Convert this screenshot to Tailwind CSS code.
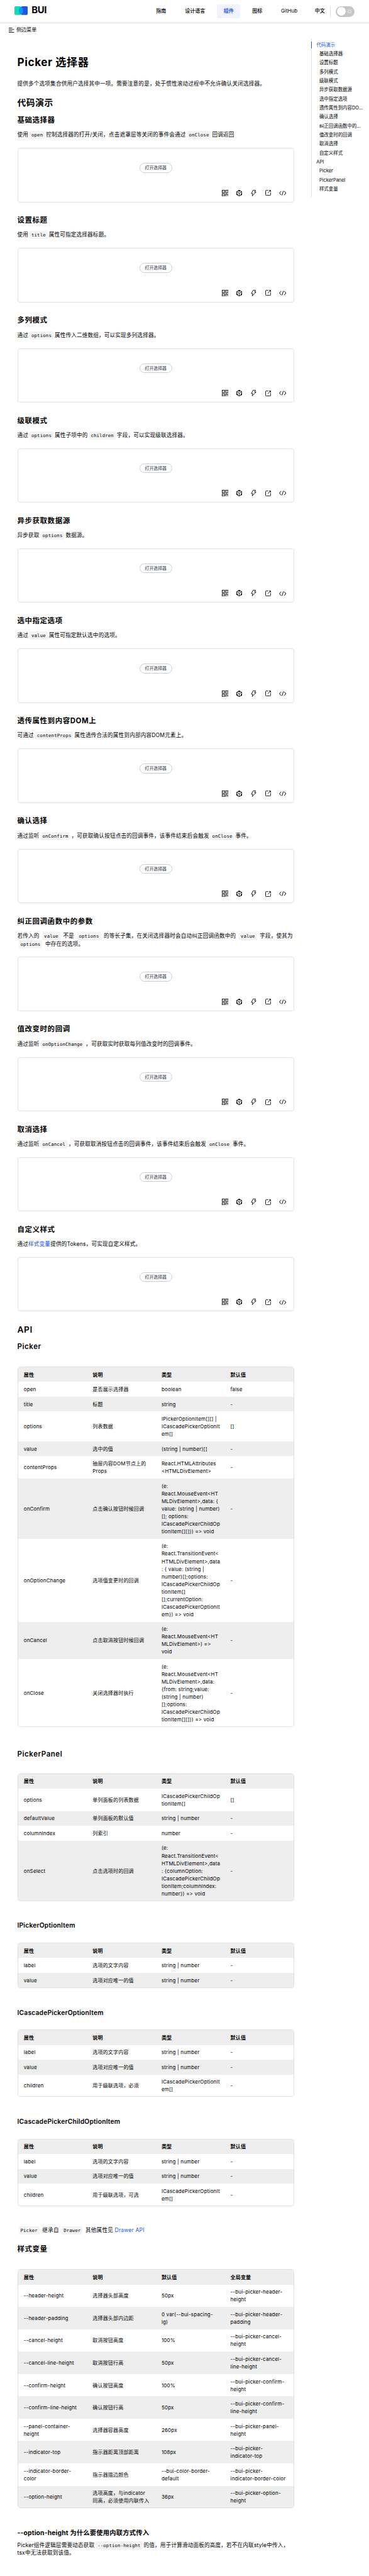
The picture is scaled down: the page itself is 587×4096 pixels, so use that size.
<!DOCTYPE html>
<html lang="zh-CN">
<head>
<meta charset="utf-8">
<title>Picker 选择器 - BUI</title>
<script src="https://cdn.jsdelivr.net/npm/@tailwindcss/browser@4"></script>
</head>
<body class="bg-white overflow-hidden">
<svg class="hidden">
  <symbol id="i-qr" viewBox="0 0 18 18"><g fill="none" stroke="currentColor" stroke-width="1.5"><rect x=".8" y=".8" width="6.7" height="6.7"/><rect x="10.5" y=".8" width="6.7" height="6.7"/><rect x=".8" y="10.5" width="6.7" height="6.7"/><path d="M10.6 18v-7.4h3.2v3.2h3.6v-3.9"/></g><path fill="currentColor" d="M3.3 3.3h1.7v1.7H3.3zM13 3.3h1.7v1.7H13zM3.3 13h1.7v1.7H3.3zM13 16.3h1.5v1.5H13zM16.3 16.3h1.5v1.5h-1.5z"/></symbol>
  <symbol id="i-cube" viewBox="0 0 16 18"><path fill="none" stroke="currentColor" stroke-width="1.5" stroke-linejoin="round" d="M8 .9 15.1 4.9v8.2L8 17.1.9 13.1V4.9zM.9 4.9 8 9l7.1-4.1M8 9v8"/><path fill="currentColor" d="M8 .5 12 2.8 8 5 4 2.8zM.5 9 4 11v4.2L.5 13.2zM15.500 9 12 11v4.200l3.500-2z"/></symbol>
  <symbol id="i-bolt" viewBox="0 0 16 18"><path fill="none" stroke="currentColor" stroke-width="1.5" stroke-linejoin="miter" d="M6.200 1h7.200l-3 4.900h4.200L3.700 16.600l1.900-6.400H1.500z"/></symbol>
  <symbol id="i-open" viewBox="0 0 16 16"><path fill="none" stroke="currentColor" stroke-width="1.600" d="M8 1.200H2.600Q1 1.200 1 2.800v10.600Q1 15 2.600 15h10.800q1.600 0 1.600-1.600V7.500M7.500 8.500 14.500 1.500M10.300 1.200H15v4.700"/></symbol>
  <symbol id="i-code" viewBox="0 0 20 14"><path fill="none" stroke="currentColor" stroke-width="1.700" d="M6 1.500.9 7 6 12.500M14 1.500 19.100 7 14 12.500M11.800 1 8.200 13"/></symbol>
</svg>

<div class="w-[1023px] h-[7142px] overflow-hidden [zoom:0.5735] text-black tracking-[0.3px] font-['Inter','Noto_Sans_CJK_SC',sans-serif] flex flex-col">
  <header class="h-[65px] shrink-0 border-b border-[#e0e0e0] flex items-center pl-[40px]">
    <svg class="w-[37px] h-[24px] shrink-0 -mt-[4px]" viewBox="0 0 37 24">
      <path fill="#10dcae" d="M3.500 0H15.500C21 1.500 24 7 24 12s-3 10.500-8.500 12H3.500Q0 24 0 20.500v-17Q0 0 3.500 0z"/>
      <path fill="#2355e0" d="M33.500 0H21.500C16 1.500 13 7 13 12s3 10.500 8.500 12h12q3.500 0 3.500-3.500v-17Q37 0 33.500 0z"/>
      <path fill="#0c93ff" d="M18.500 1.300C22.200 3.800 24 8 24 12s-1.800 8.200-5.500 10.700C14.800 20.200 13 16 13 12s1.800-8.200 5.500-10.700z"/>
    </svg>
    <span class="ml-[10.500px] w-[60px] -mt-[4px] text-[26px] leading-[30px] font-bold tracking-[-0.6px]">BUI</span>
    <nav class="ml-[268px] flex items-center text-[14px] leading-[20px] tracking-normal font-medium whitespace-nowrap">
      <span class="h-[38px] flex items-center px-[17.500px]">指南</span>
      <span class="ml-[17px] h-[38px] flex items-center px-[17.500px]">设计语言</span>
      <span class="ml-[16px] w-[64px] h-[38px] flex items-center justify-center rounded-[4px] bg-[#f0f3ff] text-[#2459e5] font-bold">组件</span>
      <span class="ml-[16px] h-[38px] flex items-center px-[17.500px]">图标</span>
      <span class="ml-[17px] w-[80px] h-[38px] flex items-center justify-center font-normal">GitHub</span>
      <span class="ml-[31px] h-[38px] flex items-center">中文</span>
    </nav>
    <div class="ml-[15px] h-[30px] w-0 border-l border-[#e0e0e0]"></div>
    <div class="ml-[14px] w-[51px] h-[30px] rounded-full bg-[#c6c6c6] flex items-center pl-[3px] text-white">
      <div class="w-[24px] h-[24px] rounded-full bg-white shadow"></div>
      <svg class="ml-[3px] w-[15px] h-[15px]" viewBox="0 0 15 15" fill="none" stroke="currentColor" stroke-width="1.100"><circle cx="7.500" cy="7.500" r="3.800"/><path d="M7.500 0v1.800M7.500 13.200V15M0 7.500h1.800M13.200 7.500H15M2.200 2.200l1.300 1.300M11.500 11.500l1.300 1.300M2.200 12.800l1.300-1.300M11.500 3.500l1.300-1.300"/></svg>
    </div>
  </header>

  <div class="h-[40px] shrink-0 flex items-center pl-[24.500px] pb-[2px]">
    <svg class="w-[15px] h-[14px]" viewBox="0 0 15 14" fill="none" stroke="currentColor" stroke-width="1.500"><path d="M0 .9h9.500M0 5h15M0 9h9.500M0 13.100h15"/></svg>
    <span class="ml-[6px] text-[14px] leading-[20px] tracking-normal -mt-[2px]">侧边菜单</span>
  </div>

  <div class="flex items-start">
    <main class="w-[768px] ml-[48px] mr-[48px] shrink-0 text-[15px] leading-[22px]">
      <h1 class="mt-[48px] h-[40px] leading-[40px] text-[30px] font-bold tracking-[1px]">Picker 选择器</h1>
      <p class="mt-[28px] h-[22px] whitespace-nowrap">提供多个选项集合供用户选择其中一项。需要注意的是，处于惯性滚动过程中不允许确认关闭选择器。</p>
      <h2 class="mt-[28px] h-[30px] leading-[30px] text-[24px] font-bold tracking-[1px]">代码演示</h2>
      <div id="demos" class="mt-[18.300px]"></div>
      <h2 class="h-[28px] leading-[28px] text-[24px] font-semibold tracking-[1px]">API</h2>
      <div id="api"></div>
      <p class="h-[44px] whitespace-nowrap">Picker组件逻辑层需要动态获取<code class="mx-[3.600px] px-[5px] py-[3.500px] leading-none rounded-[4px] bg-[#f3f3f3] text-[12.750px] font-['DejaVu_Sans_Mono',monospace]">--option-height</code>的值，用于计算滑动面板的高度，若不在内联style中传入，<br>tsx中无法获取到该值。</p>
    </main>
    <aside class="mt-[1px] w-[150px] shrink-0 border-l border-[#e0e0e0] h-[439px] pt-[7px] text-[13px] tracking-normal leading-[25px] whitespace-nowrap" id="toc"></aside>
  </div>
</div>

<script>
const code = s => s.replace(/`([^`]+)`/g, `<code class="mx-[3.600px] px-[5px] py-[3.500px] leading-none rounded-[4px] bg-[#f3f3f3] text-[12.750px] font-['DejaVu_Sans_Mono',monospace]">$1</code>`);
const esc = s => s.replace(/</g, '&lt;').replace(/>/g, '&gt;');
const demos = [
  ['基础选择器', '使用`open`控制选择器的打开/关闭，点击遮罩层等关闭的事件会通过`onClose`回调返回'],
  ['设置标题', '使用`title`属性可指定选择器标题。'],
  ['多列模式', '通过`options`属性传入二维数组，可以实现多列选择器。'],
  ['级联模式', '通过`options`属性子项中的`children`字段，可以实现级联选择器。'],
  ['异步获取数据源', '异步获取`options`数据源。'],
  ['选中指定选项', '通过`value`属性可指定默认选中的选项。'],
  ['透传属性到内容DOM上', '可通过`contentProps`属性透传合法的属性到内部内容DOM元素上。'],
  ['确认选择', '通过监听`onConfirm`，可获取确认按钮点击的回调事件，该事件结束后会触发`onClose`事件。'],
  ['纠正回调函数中的参数', '若传入的 `value` 不是 `options` 的等长子集，在关闭选择器时会自动纠正回调函数中的 `value` 字段，使其为<br>`options` 中存在的选项。'],
  ['值改变时的回调', '通过监听`onOptionChange`，可获取实时获取每列值改变时的回调事件。'],
  ['取消选择', '通过监听`onCancel`，可获取取消按钮点击的回调事件，该事件结束后会触发`onClose`事件。'],
  ['自定义样式', '通过<a class="text-[#2459e5]">样式变量</a>提供的Tokens，可实现自定义样式。'],
];
document.getElementById('demos').innerHTML = demos.map(([t, d]) => `
<section class="${d.includes('<br>') ? 'h-[299.600px]' : 'h-[277.600px]'}">
  <h3 class="h-[30px] leading-[30px] text-[20px] font-bold tracking-[1px]">${t}</h3>
  <p class="mt-[14px] ${d.includes('<br>') ? 'h-[44px]' : 'h-[22px]'} whitespace-nowrap">${code(d)}</p>
  <div class="mt-[25px] h-[150.500px] rounded-[8px] border border-[#e0e0e0] flex flex-col items-center justify-between pt-[40px] pb-[14px]">
    <button class="w-[90px] h-[27px] rounded-full border border-[#ccced6] text-[12px] leading-[20px] tracking-normal font-medium text-[#50566a]">打开选择器</button>
    <div class="self-end mr-[10px] flex items-center text-black">
      <span class="w-[40px] h-[20px] flex items-center justify-center"><svg class="w-[18px] h-[18px]"><use href="#i-qr"/></svg></span>
      <span class="w-[40px] h-[20px] flex items-center justify-center"><svg class="w-[16px] h-[18px]"><use href="#i-cube"/></svg></span>
      <span class="w-[40px] h-[20px] flex items-center justify-center"><svg class="w-[16px] h-[18px]"><use href="#i-bolt"/></svg></span>
      <span class="w-[40px] h-[20px] flex items-center justify-center"><svg class="w-[16px] h-[16px]"><use href="#i-open"/></svg></span>
      <span class="w-[40px] h-[20px] flex items-center justify-center"><svg class="w-[20px] h-[14px]"><use href="#i-code"/></svg></span>
    </div>
  </div>
</section>`).join('');

const table = rows => {
  const heights = rows.map(r => 20 + 21 * Math.max(...r.map(c => c.split('\n').length)));
  const total = 2 + heights.reduce((a, b) => a + b, 0);
  return `<div class="rounded-[8px] border border-[#e0e0e0] overflow-hidden text-[14px] leading-[21px]" style="height:${total}px">` + rows.map((r, i) =>
  `<div class="grid grid-cols-4 items-center ${i % 2 ? 'bg-white' : 'bg-[#eeeeee]'} ${i ? '' : 'font-bold'}" style="height:${heights[i]}px">` +
  r.map(c => `<div class="pl-[16px] whitespace-pre">${esc(c)}</div>`).join('') + '</div>').join('') + '</div>';
};
const head = ['属性', '说明', '类型', '默认值'];
const label = ['label', '选项的文字内容', 'string | number', '-'];
const value = ['value', '选项对应唯一的值', 'string | number', '-'];
const h3 = (t, c) => `<h3 class="${c} h-[30px] leading-[30px] text-[20px] font-semibold tracking-[1px]">${t}</h3>`;
const h4 = (t, c) => `<h4 class="${c} h-[28px] leading-[28px] text-[18px] font-semibold">${t}</h4>`;
document.getElementById('api').innerHTML =
h3('Picker', 'mt-[19.400px] mb-[39px]') + table([head,
  ['open', '是否展示选择器', 'boolean', 'false'],
  ['title', '标题', 'string', '-'],
  ['options', '列表数据', 'IPickerOptionItem[][] |\nICascadePickerOptionIt\nem[]', '[]'],
  ['value', '选中的值', '(string | number)[]', '-'],
  ['contentProps', '抽屉内容DOM节点上的\nProps', 'React.HTMLAttributes\n<HTMLDivElement>', '-'],
  ['onConfirm', '点击确认按钮时候回调', '(e:\nReact.MouseEvent<HT\nMLDivElement>,data: {\nvalue: (string | number)\n[]; options:\nICascadePickerChildOp\ntionItem[][]}) => void', '-'],
  ['onOptionChange', '选项值变更时的回调', '(e:\nReact.TransitionEvent<\nHTMLDivElement>,data\n: { value: (string |\nnumber)[];options:\nICascadePickerChildOp\ntionItem[]\n[];currentOption:\nICascadePickerOptionIt\nem}) => void', '-'],
  ['onCancel', '点击取消按钮时候回调', '(e:\nReact.MouseEvent<HT\nMLDivElement>) =>\nvoid', '-'],
  ['onClose', '关闭选择器时执行', '(e:\nReact.MouseEvent<HT\nMLDivElement>,data:\n{from: string;value:\n(string | number)\n[];options:\nICascadePickerChildOp\ntionItem[][]}) => void', '-'],
]) + h3('PickerPanel', 'mt-[60px] mb-[38px]') + table([head,
  ['options', '单列面板的列表数据', 'ICascadePickerChildOp\ntionItem[]', '[]'],
  ['defaultValue', '单列面板的默认值', 'string | number', '-'],
  ['columnIndex', '列索引', 'number', '-'],
  ['onSelect', '点击选项时的回调', '(e:\nReact.TransitionEvent<\nHTMLDivElement>,data\n: {columnOption:\nICascadePickerChildOp\ntionItem;columnIndex:\nnumber}) => void', '-'],
]) + h4('IPickerOptionItem', 'mt-[53.500px] mb-[34px]') + table([head, label, value])
+ h4('ICascadePickerOptionItem', 'mt-[54px] mb-[34px]') + table([head, label, value, ['children', '用于级联选项，必须', 'ICascadePickerOptionIt\nem[]', '-']])
+ h4('ICascadePickerChildOptionItem', 'mt-[53.500px] mb-[34px]') + table([head, label, value, ['children', '用于级联选项，可选', 'ICascadePickerOptionIt\nem[]', '-']])
+ `<p class="mt-[55.500px] h-[22px] whitespace-nowrap">${code('`Picker` 继承自 `Drawer` 其他属性见 ')}<a class="text-[#2459e5]">Drawer API</a></p>`
+ `<h3 class="mt-[28px] mb-[39.500px] h-[30px] leading-[30px] text-[20px] font-bold tracking-[1px]">样式变量</h3>` + table([['属性', '说明', '默认值', '全局变量'],
  ['--header-height', '选择器头部高度', '50px', '--bui-picker-header-\nheight'],
  ['--header-padding', '选择器头部内边距', '0 var(--bui-spacing-\nlg)', '--bui-picker-header-\npadding'],
  ['--cancel-height', '取消按钮高度', '100%', '--bui-picker-cancel-\nheight'],
  ['--cancel-line-height', '取消按钮行高', '50px', '--bui-picker-cancel-\nline-height'],
  ['--confirm-height', '确认按钮高度', '100%', '--bui-picker-confirm-\nheight'],
  ['--confirm-line-height', '确认按钮行高', '50px', '--bui-picker-confirm-\nline-height'],
  ['--panel-container-\nheight', '选择器容器高度', '260px', '--bui-picker-panel-\nheight'],
  ['--indicator-top', '指示器距离顶部距离', '108px', '--bui-picker-\nindicator-top'],
  ['--indicator-border-\ncolor', '指示器描边颜色', '--bui-color-border-\ndefault', '--bui-picker-\nindicator-border-color'],
  ['--option-height', '选项高度，与indicator\n同高，必须使用内联传入', '36px', '--bui-picker-option-\nheight'],
]) + `<h4 class="mt-[53px] mb-[10px] h-[28px] leading-[28px] text-[18px] font-bold">--option-height 为什么要使用内联方式传入</h4>`;

const toc = ['代码演示', '基础选择器', '设置标题', '多列模式', '级联模式', '异步获取数据源', '选中指定选项', '透传属性到内容DO...', '确认选择', '纠正回调函数中的...', '值改变时的回调', '取消选择', '自定义样式', 'API', 'Picker', 'PickerPanel', '样式变量'];
document.getElementById('toc').innerHTML = toc.map((t, i) => i === 0
  ? `<div class="h-[25px] flex items-center -ml-[1.744px] text-[#2459e5]"><i class="h-[19px] w-[1.744px] bg-[#2459e5]"></i><span class="ml-[12px]">${t}</span></div>`
  : `<div class="h-[25px] ${t === 'API' ? 'pl-[12px]' : 'pl-[20px]'}">${t}</div>`).join('');
</script>
</body>
</html>
